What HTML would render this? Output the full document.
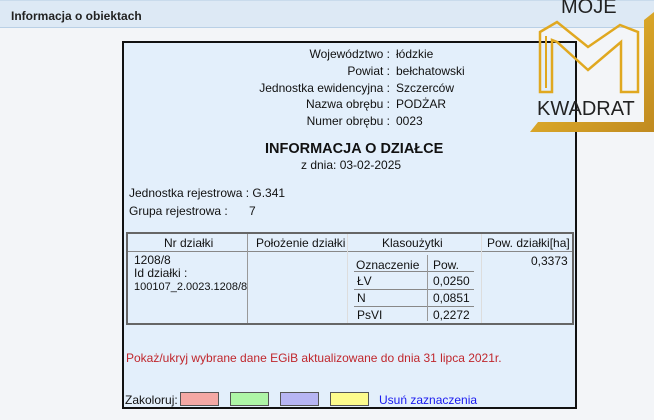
<!DOCTYPE html>
<html><head><meta charset="utf-8"><style>
*{margin:0;padding:0;box-sizing:border-box}
body{width:654px;height:420px;background:#f3f5f8;font-family:"Liberation Sans",Arial,sans-serif;font-size:12px;color:#111;position:relative;overflow:hidden}
.hdr{position:absolute;left:0;top:0;width:654px;height:28px;background:#dde9f5;border-bottom:1px solid #b9d0e6;border-top:1px solid #c9dbec}
.hdr b{position:absolute;left:11px;top:8px;font-size:12px;color:#222}
.box{position:absolute;left:122px;top:41px;width:455px;height:368px;background:#e3effb;border:2px solid #111}
.a{position:absolute;white-space:nowrap}
.l{position:absolute;right:185px;white-space:nowrap;text-align:right}
.v{position:absolute;left:272px;white-space:nowrap}
.sw{position:absolute;top:349px;width:39px;height:14px;border:1px solid #555}
</style></head><body>
<div class="hdr"><b>Informacja o obiektach</b></div>
<div class="box">
 <div class="l" style="top:4px">Województwo :</div><div class="v" style="top:4px">łódzkie</div>
 <div class="l" style="top:21px">Powiat :</div><div class="v" style="top:21px">bełchatowski</div>
 <div class="l" style="top:38px">Jednostka ewidencyjna :</div><div class="v" style="top:38px">Szczerców</div>
 <div class="l" style="top:54px">Nazwa obrębu :</div><div class="v" style="top:54px">PODŻAR</div>
 <div class="l" style="top:71px">Numer obrębu :</div><div class="v" style="top:71px">0023</div>
 <div class="a" style="left:141px;top:98px;font-size:14.5px;font-weight:bold">INFORMACJA O DZIAŁCE</div>
 <div class="a" style="left:177px;top:115px">z dnia: 03-02-2025</div>
 <div class="a" style="left:5px;top:143px">Jednostka rejestrowa : G.341</div>
 <div class="a" style="left:5px;top:161px">Grupa rejestrowa :</div><div class="a" style="left:125px;top:161px">7</div>
 <div class="a" style="left:2px;top:189px;width:448px;height:93px;border:2px solid #666"></div>
 <div class="a" style="left:4px;top:208px;width:444px;border-top:1px solid #888"></div>
 <div class="a" style="left:123px;top:191px;height:89px;border-left:1px solid #999"></div>
 <div class="a" style="left:223px;top:191px;height:89px;border-left:1px solid #ddd"></div>
 <div class="a" style="left:357px;top:191px;height:89px;border-left:1px solid #ddd"></div>
 <div class="a" style="left:40px;top:193px">Nr działki</div>
 <div class="a" style="left:132px;top:193px">Położenie działki</div>
 <div class="a" style="left:258px;top:193px">Klasoużytki</div>
 <div class="a" style="left:363px;top:193px">Pow. działki[ha]</div>
 <div class="a" style="left:10px;top:211px;line-height:13px">1208/8<br>Id działki :<br><span style="font-size:11px">100107_2.0023.1208/8</span></div>
 <div class="a" style="left:407px;top:211px">0,3373</div>
 <div class="a" style="left:232px;top:215px">Oznaczenie</div><div class="a" style="left:309px;top:215px">Pow.</div>
 <div class="a" style="left:230px;top:228px;width:120px;border-top:1px solid #888"></div>
 <div class="a" style="left:230px;top:246px;width:120px;border-top:1px solid #888"></div>
 <div class="a" style="left:230px;top:263px;width:120px;border-top:1px solid #888"></div>
 <div class="a" style="left:303px;top:212px;height:66px;border-left:1px solid #999"></div>
 <div class="a" style="left:233px;top:231px">ŁV</div><div class="a" style="left:309px;top:231px">0,0250</div>
 <div class="a" style="left:233px;top:248px">N</div><div class="a" style="left:309px;top:248px">0,0851</div>
 <div class="a" style="left:233px;top:265px">PsVI</div><div class="a" style="left:309px;top:265px">0,2272</div>
 <div class="a" style="left:2px;top:308px;color:#c0272d">Pokaż/ukryj wybrane dane EGiB aktualizowane do dnia 31 lipca 2021r.</div>
 <div class="a" style="left:1px;top:350px">Zakoloruj:</div>
 <div class="sw" style="left:56px;background:#f4a8a4"></div>
 <div class="sw" style="left:106px;background:#aef5a6"></div>
 <div class="sw" style="left:156px;background:#b7b5f3"></div>
 <div class="sw" style="left:206px;background:#fdfb8c"></div>
 <div class="a" style="left:255px;top:350px;color:#1a1af0">Usuń zaznaczenia</div>
</div>
<svg style="position:absolute;left:520px;top:0" width="134" height="140" viewBox="0 0 134 140">
 <defs><linearGradient id="g" x1="0" y1="0" x2="1" y2="1"><stop offset="0" stop-color="#f0c030"/><stop offset="1" stop-color="#c08a20"/></linearGradient></defs>
 <text x="41" y="13" font-family="Liberation Sans,sans-serif" font-size="20" fill="#222">MOJE</text>
 <path d="M20 32 L37 22 L68 47 L100 25 L118 32 L118 92 L101 92 L101 42 L68 70 L37 42 L32 40 L32 92 L20 92 Z" fill="none" stroke="#e0a820" stroke-width="2.5" stroke-linejoin="miter"/>
 <path d="M26 36 L26 88" stroke="#e0a820" stroke-width="2" fill="none"/>
 <path d="M124 20 L134 12 L134 132 L10 132 L18 122 L124 122 Z" fill="url(#g)"/>
 <text x="17" y="115" font-family="Liberation Sans,sans-serif" font-size="20" fill="#222">KWADRAT</text>
</svg>
</body></html>
